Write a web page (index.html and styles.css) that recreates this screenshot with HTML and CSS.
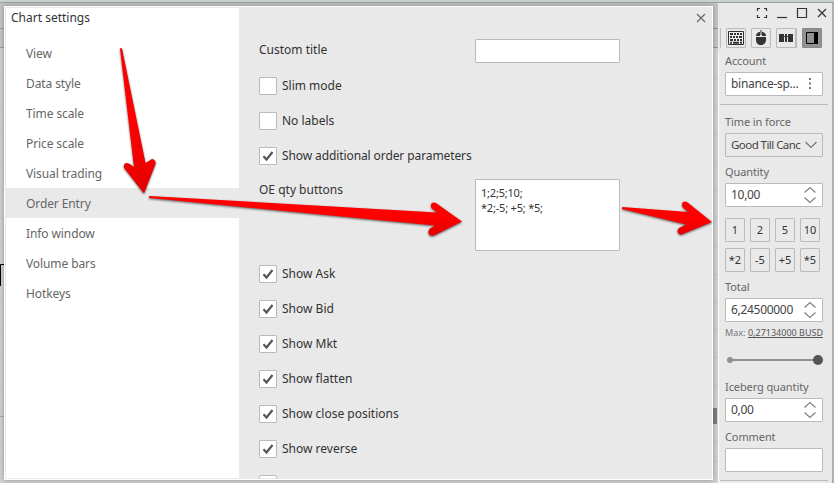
FILE: index.html
```html
<!DOCTYPE html>
<html lang="en">
<head>
<meta charset="utf-8">
<title>Chart settings</title>
<link rel="stylesheet" href="styles.css">
</head>
<body>
<svg class="defs" aria-hidden="true">
  <symbol id="check" viewBox="0 0 16 16"><path d="M3.500 8.300l3 3.200 6-7.500" fill="none" stroke="#555" stroke-width="2.200"/></symbol>
  <symbol id="spin" viewBox="0 0 14 18"><path d="M1.500 6.500L7 1.500l5.500 5M1.500 11.500l5.500 5 5.500-5" fill="none" stroke="#808080" stroke-width="1.200"/></symbol>
</svg>
<div class="desktop">
  <svg class="chart" viewBox="0 0 718 483">
    <path d="M0 28.500h718M0 47.500h718" stroke="#999"/>
    <path d="M0 79.500h718M0 107.500h718M0 135.500h718M0 163.500h718M0 190.500h718M0 218.500h718M0 246.500h718M0 274.500h718M0 302.500h718M0 329.500h718M0 357.500h718M0 385.500h718M0 412.500h718M0 440.500h718M0 461.500h718" stroke="#c8c8c8"/>
    <path d="M0 416.500h712" stroke="#aaa"/>
    <path d="M4 264.500H.5V286" fill="none" stroke="#000"/>
    <path d="M713 408h4v16h-4z" fill="#808080"/>
  </svg>
  <aside class="panel">
    <header class="titlebar">
      <svg width="12" height="12" viewBox="0 0 12 12"><path d="M1.500 4V1.500H4M8 1.500h2.500V4M10.500 8v2.500H8M4 10.500H1.500V8" /></svg>
      <svg width="12" height="12" viewBox="0 0 12 12"><path d="M1 10.500h10"/></svg>
      <svg width="12" height="12" viewBox="0 0 12 12"><path d="M1.500 1.500h9v9h-9z"/></svg>
      <svg width="12" height="12" viewBox="0 0 12 12"><path d="M2 2l8 8M10 2l-8 8"/></svg>
    </header>
    <div class="toolbar">
      <i class="sep"></i>
      <span class="tool"><svg width="18" height="18" viewBox="0 0 18 18"><path d="M1.500 2.500h15v13h-15z" fill="#eee" stroke="#3a2a40"/><path d="M3 5h3M7 5h2M10 5h2M13 5h2M3 8h2M6 8h2M9 8h2M12 8h3M3 11h3M7 11h2M10 11h2M13 11h2M3 13.700h2M6 13.700h6M13 13.700h2" stroke="#333" stroke-width="2"/></svg></span>
      <span class="tool"><svg width="18" height="18" viewBox="0 0 18 18"><path fill="#333" d="M4 8h10v3c0 3-2 5-5 5s-5-2-5-5zM4 7c0-2 1.500-4 4-4v4zM10 3c2.500 0 4 2 4 4h-4zM8.500 1h1v5h-1z"/></svg></span>
      <span class="tool"><svg width="18" height="18" viewBox="0 0 18 18"><path fill="#333" d="M2 5h5v8H2zM11 5h5v8h-5zM6 5h6v2l-2 1v5H8V8L6 7z"/><path d="M7.500 5v2M10.500 5v2M7.500 9v4M10.500 9v4" stroke="#e9e9e9"/></svg></span>
      <i class="sep"></i>
      <span class="tool on"><svg width="18" height="18" viewBox="0 0 18 18"><path d="M3.500 3.500h11v11h-11z" fill="none" stroke="#000"/><path d="M11 3h4v12h-4z"/></svg></span>
    </div>
    <div class="form">
      <label class="cap">Account</label>
      <div class="box"><span class="acct">binance-sp...</span><svg class="dots" width="4" height="12" viewBox="0 0 4 12"><path fill="#777" d="M1 0h2v2H1zM1 4.500h2v2H1zM1 9h2v2H1z"/></svg></div>
      <hr>
      <label class="cap tif">Time in force</label>
      <div class="box flat"><span class="gtc">Good Till Canc</span><svg width="12" height="8" viewBox="0 0 12 8"><path d="M.5 1L6 6.500 11.500 1" fill="none" stroke="#777" stroke-width="1.200"/></svg></div>
      <label class="cap">Quantity</label>
      <div class="box"><span>10,00</span><svg width="14" height="18"><use href="#spin"/></svg></div>
      <div class="quick"><b>1</b><b>2</b><b>5</b><b>10</b><b>*2</b><b>-5</b><b>+5</b><b>*5</b></div>
      <label class="cap total">Total</label>
      <div class="box"><span>6,24500000</span><svg width="14" height="18"><use href="#spin"/></svg></div>
      <div class="max"><span>Max:</span><u>0,27134000 BUSD</u></div>
      <svg class="slider" width="98" height="12" viewBox="0 0 98 12"><path d="M5 6h88" stroke="#909090" stroke-width="2"/><circle cx="5" cy="6" r="3" fill="#909090"/><circle cx="93" cy="6" r="5" fill="#555"/></svg>
      <label class="cap ice">Iceberg quantity</label>
      <div class="box"><span>0,00</span><svg width="14" height="18"><use href="#spin"/></svg></div>
      <label class="cap">Comment</label>
      <div class="box"></div>
      <hr>
    </div>
  </aside>
</div>

<section class="dialog">
  <nav class="side">
    <h1>Chart settings</h1>
    <ul>
      <li><span>View</span></li><li><span>Data style</span></li><li><span>Time scale</span></li><li><span>Price scale</span></li><li><span>Visual trading</span></li>
      <li class="sel"><span>Order Entry</span></li><li><span>Info window</span></li><li><span>Volume bars</span></li><li><span>Hotkeys</span></li>
    </ul>
  </nav>
  <div class="content">
    <svg class="close" width="10" height="10" viewBox="0 0 10 10"><path d="M1 1l8 8M9 1L1 9" stroke="#666" stroke-width="1.200"/></svg>
    <div class="row title"><span>Custom title</span><div class="input"></div></div>
    <div class="row"><i class="cb"></i><span>Slim mode</span></div>
    <div class="row"><i class="cb"></i><span>No labels</span></div>
    <div class="row"><i class="cb"><svg><use href="#check"/></svg></i><span class="long">Show additional order parameters</span></div>
    <div class="row qty"><span>OE qty buttons</span><div class="input area"><div>1;2;5;10;</div><div>*2;-5; +5; *5;</div></div></div>
    <div class="row"><i class="cb"><svg><use href="#check"/></svg></i><span>Show Ask</span></div>
    <div class="row"><i class="cb"><svg><use href="#check"/></svg></i><span>Show Bid</span></div>
    <div class="row"><i class="cb"><svg><use href="#check"/></svg></i><span>Show Mkt</span></div>
    <div class="row"><i class="cb"><svg><use href="#check"/></svg></i><span>Show flatten</span></div>
    <div class="row"><i class="cb"><svg><use href="#check"/></svg></i><span>Show close positions</span></div>
    <div class="row"><i class="cb"><svg><use href="#check"/></svg></i><span>Show reverse</span></div>
    <div class="row"><i class="cb"></i></div>
  </div>
</section>

<svg class="arrows" viewBox="0 0 834 483">
  <defs><linearGradient id="r" x1="0" y1="0" x2="0" y2="1"><stop offset=".5" stop-color="#f00"/><stop offset="1" stop-color="#e40000"/></linearGradient></defs>
  <g fill="url(#r)">
    <path d="M120 48.500q1-1 2 0L145.500 163 149.500 160.500Q153 157 155.500 161.500V164L144 193.500 124.500 168.500Q122.500 164.500 126 163 128.500 162.500 134 167z"/>
    <path d="M149 196v2L435 225.500 430 228.500Q427 232 429.500 235 432 236.500 435 235L462 221.500 436 203Q432 201.500 431 204.500 430.500 207 432 208.500L437 212.500z"/>
    <path d="M622 207v2L686 224.500 679 228Q676 231 679 234 681 235 684 233.500L712 222 687 202Q683.500 200.500 682 203.500 681.500 206 683.500 208L688 212z"/>
  </g>
</svg>
</body>
</html>
```
FILE: styles.css
```css
* { box-sizing: border-box; }
body { margin: 0; width: 834px; height: 483px; overflow: hidden; font: 12px/16px "Noto Sans", "Open Sans", sans-serif; color: #333; }
.defs { position: absolute; width: 0; height: 0; }
.desktop { display: flex; height: 483px; background: linear-gradient(#c8d2c8 0 2px, #9f9f9f 2px 3px, #c4c4c4 3px 48px, #d0d0d0 48px); }
.chart { width: 718px; height: 483px; flex: none; }
.panel { width: 116px; margin-top: 3px; border-right: 2px solid #b0b0b0; background: linear-gradient(90deg, #fff 1px, transparent 1px) 0 50px no-repeat #e9e9e9; }

.titlebar { display: flex; gap: 8px; height: 25px; padding: 4px 0 0 38px; }
.titlebar svg { fill: none; stroke: #333; stroke-width: 1.2; flex: none; }
.toolbar { display: flex; height: 27px; padding-left: 2px; }
.sep { width: 1px; height: 20px; background: #bbb; }
.tool { width: 20px; height: 20px; border: 1px solid #bbb; border-radius: 1px; margin-left: 5px; }
.tool svg { display: block; }
.tool.on { background: #929292; border-color: #888; }

.form { padding-left: 7px; }
.cap { display: block; height: 16px; margin: -2px 0 3px; font-size: 11px; letter-spacing: -.1px; color: #666; }
.box { display: flex; align-items: center; justify-content: space-between; width: 98px; height: 24px; padding: 0 5px; border: 1px solid #bbb; border-radius: 1px; background: #fff; white-space: nowrap; letter-spacing: -.3px; color: #444; }
.box + .cap { margin-top: 7px; }
.flat { background: #e9e9e9; }
.dots { margin-right: 5px; }
.gtc { font-size: 11.5px; letter-spacing: -.55px; }
.form hr { width: 108px; height: 1px; margin: 8px 0 9px -5px; border: 0; background: #bbb; }
.cap.tif { margin-top: 0; }
.quick { display: grid; grid-template-columns: repeat(4, 20px); grid-auto-rows: 24px; gap: 6px 5px; margin-top: 11px; }
.quick b { border: 1px solid #bbb; border-radius: 1px; text-align: center; line-height: 21px; font-size: 11px; font-weight: 400; }
.cap.total { margin-top: 7px; }
.max { display: flex; justify-content: space-between; width: 98px; height: 16px; margin-top: 3px; font-size: 9px; color: #777; white-space: nowrap; }
.max u { color: #555; }
.slider { display: block; margin-top: 13px; }
.cap.ice { margin-top: 13px; }

.dialog { position: absolute; left: 4px; top: 6px; width: 709px; height: 474px; display: flex; border: 1px solid #fff; background: #e9e9e9; padding: 1px 0 1px 1px; box-shadow: 0 0 5px rgba(0,0,0,.3); }
.side { width: 233px; background: #fff; }
.side h1 { margin: 2px 0 12px 5px; font-size: 12px; font-weight: 400; line-height: 16px; }
.side ul { list-style: none; margin: 0; padding: 0; }
.side li { height: 30px; padding-left: 20px; line-height: 31px; letter-spacing: -.1px; color: #666; }
.side .sel { background: #e9e9e9; }
.content { flex: 1; overflow: hidden; padding: 31px 0 0 20px; position: relative; }
.close { position: absolute; right: 6px; top: 5px; }
.row { display: flex; align-items: flex-start; height: 35px; }
.row > span { margin: 1px 0 0 5px; }
.row > .long { letter-spacing: -.1px; }
.cb { width: 18px; height: 18px; border: 1px solid #bbb; border-radius: 1px; background: #fff; }
.cb svg { display: block; width: 16px; height: 16px; }
.row.title { height: 38px; }
.title > span, .row.qty > span { width: 216px; margin: 3px 0 0; }
.input { width: 145px; height: 24px; border: 1px solid #bbb; border-radius: 1px; background: #fff; }
.row.qty { height: 86px; margin-top: -3px; }
.area { height: 72px; padding: 5px; font-size: 11px; line-height: 15px; letter-spacing: -.2px; }
.arrows { position: absolute; inset: 0; width: 834px; height: 483px; filter: drop-shadow(0 1px 1px rgba(0,0,0,.6)); }
```
